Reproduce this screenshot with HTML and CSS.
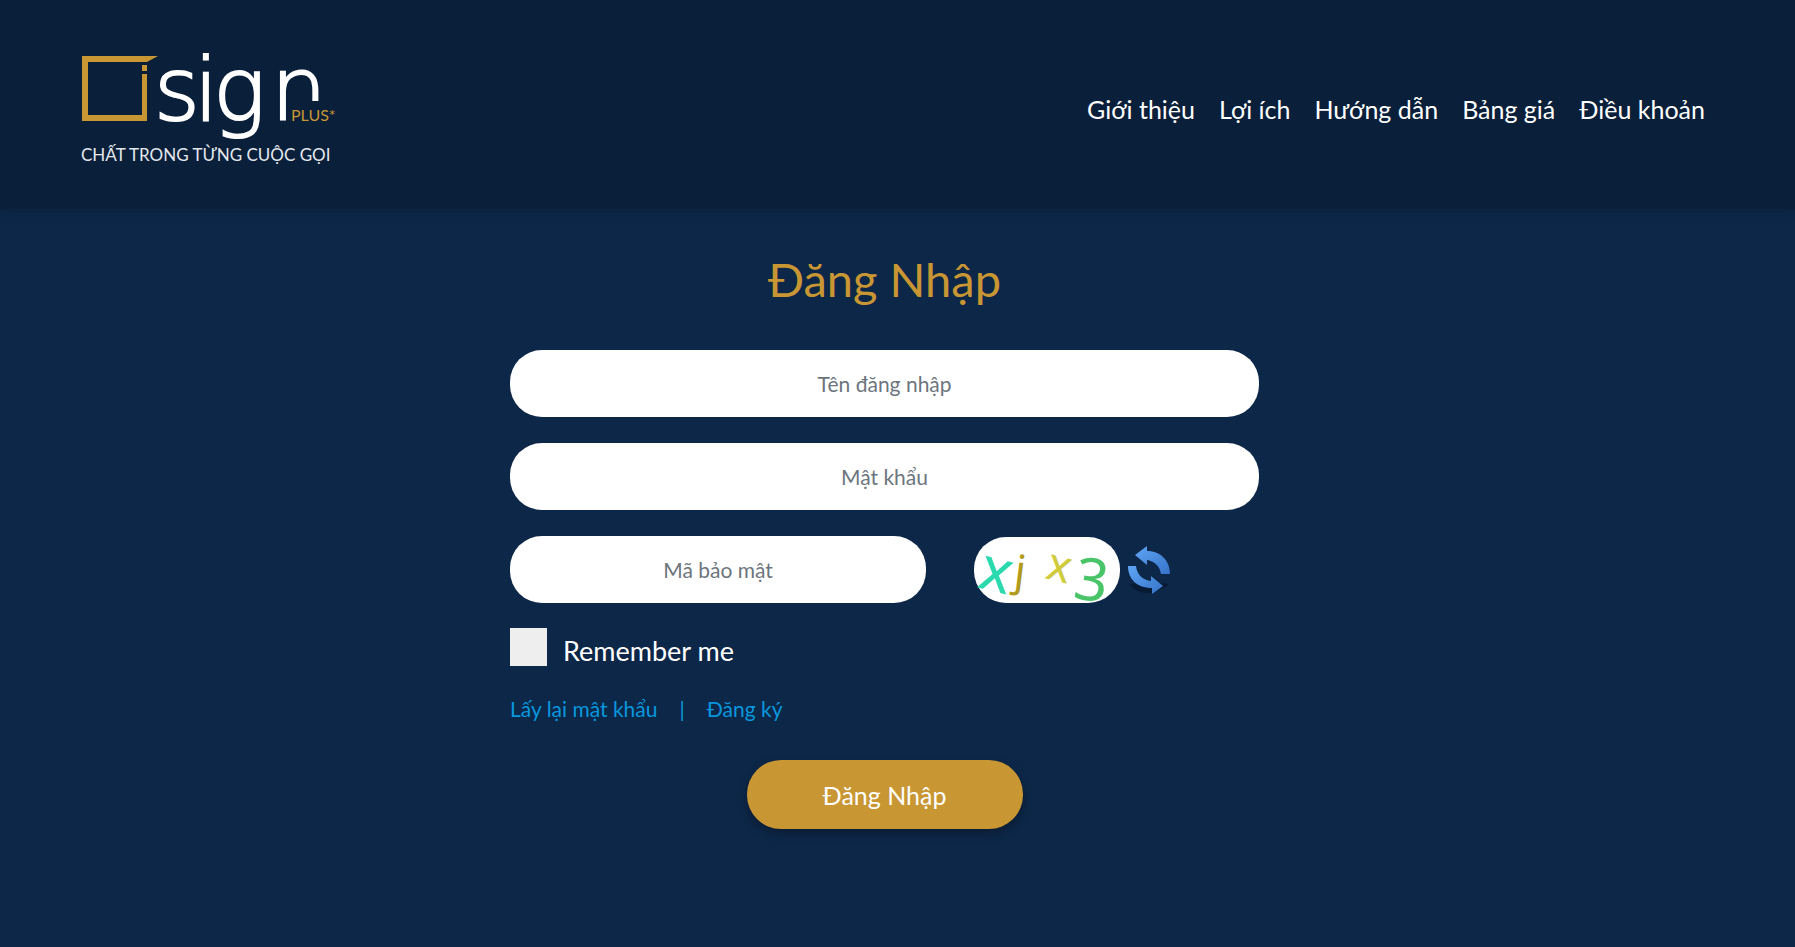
FILE: index.html
```html
<!DOCTYPE html>
<html lang="vi">
<head>
    <meta charset="UTF-8">
    <meta name="viewport" content="width=device-width, initial-scale=1.0">
    <title>Đăng Nhập</title>
    <link rel="stylesheet" href="styles.css">
</head>
<body>
    <header class="header">
        <a class="logo" href="#" aria-label="isign plus">
            <svg width="254" height="106" viewBox="0 0 254 106">
                <path fill="#c89632" d="M0 0H76L65 6H6V59H60V18H65V65H0zM60 9H65V15H60z"/>
                <text class="logo-name" x="72 112 131 189" y="64">sign</text>
                <rect x="207" y="45" width="47" height="22" fill="#0a1f3a"/>
                <text class="logo-plus" x="209" y="65">PLUS*</text>
                <text class="logo-slogan" x="-1" y="105">CHẤT TRONG TỪNG CUỘC GỌI</text>
            </svg>
        </a>
        <nav class="menu">
            <a href="#">Giới thiệu</a>
            <a href="#">Lợi ích</a>
            <a href="#">Hướng dẫn</a>
            <a href="#">Bảng giá</a>
            <a href="#">Điều khoản</a>
        </nav>
    </header>

    <main class="content">
        <form class="login-form">
            <h1>Đăng Nhập</h1>
            <input class="field" type="text" placeholder="Tên đăng nhập" aria-label="Tên đăng nhập">
            <input class="field" type="password" placeholder="Mật khẩu" aria-label="Mật khẩu">
            <div class="captcha-row">
                <input class="field" type="text" placeholder="Mã bảo mật" aria-label="Mã bảo mật">
                <div class="captcha">
                    <svg class="captcha-image" width="146" height="66" viewBox="0 0 146 66">
                        <g font-family="Noto Sans, sans-serif">
                            <text transform="translate(2 50) rotate(14)" font-size="61" fill="#2bd9ae">x</text>
                            <text transform="translate(39 48) rotate(7)" font-size="43" fill="#b29a1c">j</text>
                            <text transform="translate(70 41) rotate(14)" font-size="46" fill="#cfcb3c">x</text>
                            <text transform="translate(98 61) rotate(8)" font-size="59" fill="#49c468">3</text>
                        </g>
                    </svg>
                    <button class="refresh" type="button" aria-label="Refresh">
                        <svg width="44" height="50" viewBox="0 0 44 50">
                            <defs>
                                <linearGradient id="arrow" x1="0" y1="0" x2="1" y2="1">
                                    <stop offset="0" stop-color="#5fa5f5"/>
                                    <stop offset="1" stop-color="#3673c8"/>
                                </linearGradient>
                            </defs>
                            <path fill="#081b35" d="M2 39Q10 49 23 48L39 42L42 39Q36 38 30 38z"/>
                            <path fill="url(#arrow)" d="M8 10L20 1V6C34 6 43 16 43 29H34C33 21 27 16 20 15V20z"/>
                            <path fill="url(#arrow)" d="M1 21H9C10 30 16 35 24 36V31L36 41L25 49V43C10 43 1 34 1 21z"/>
                        </svg>
                    </button>
                </div>
            </div>
            <label class="remember">
                <input type="checkbox">
                <span>Remember me</span>
            </label>
            <div class="links">
                <a href="#">Lấy lại mật khẩu</a>
                <span>|</span>
                <a href="#">Đăng ký</a>
            </div>
            <button class="submit" type="submit">Đăng Nhập</button>
        </form>
    </main>
</body>
</html>
```
FILE: styles.css
```css
* {
    box-sizing: border-box;
}

body {
    margin: 0;
    min-height: 100vh;
    background-color: #0d2748;
    color: #fff;
    font-family: "Lato", sans-serif;
}

a {
    color: inherit;
    text-decoration: none;
}

.header {
    display: flex;
    justify-content: space-between;
    align-items: center;
    min-height: 209px;
    padding: 8px 90px 0 82px;
    background-color: #0a1f3a;
    box-shadow: 0 2px 8px rgba(10, 31, 58, 0.8);
}

.logo svg {
    display: block;
    overflow: visible;
}

.logo-name {
    font-family: "DejaVu Sans", sans-serif;
    font-size: 88px;
    font-weight: 200;
    fill: #fff;
    stroke: #fff;
    stroke-width: 2;
}

.logo-plus {
    font-size: 16px;
    fill: #c89632;
}

.logo-slogan {
    font-size: 17px;
    fill: #e4e8ee;
}

.menu {
    display: flex;
    gap: 24px;
    font-size: 25px;
}

.content {
    display: flex;
    justify-content: center;
    padding: 30px 36px 32px 10px;
}

.login-form {
    display: flex;
    flex-direction: column;
    width: 100%;
    max-width: 749px;
}

h1 {
    margin: 0 0 31px;
    color: #c89632;
    font-size: 47px;
    font-weight: 400;
    line-height: 80px;
    text-align: center;
}

.field {
    width: 100%;
    height: 67px;
    margin-bottom: 26px;
    padding: 0 24px;
    border: none;
    border-radius: 32px;
    background-color: #fff;
    color: #495057;
    font-family: inherit;
    font-size: 21px;
    text-align: center;
}

.field::placeholder {
    color: #6c757d;
    opacity: 1;
}

.field:focus {
    outline: none;
}

.captcha-row {
    display: grid;
    grid-template-columns: 5fr 4fr;
}

.captcha {
    display: flex;
    align-items: center;
    gap: 7px;
    height: 67px;
    margin-left: 48px;
}

.captcha-image {
    overflow: visible;
    border-radius: 32px;
    background-color: #fff;
}

.refresh {
    display: flex;
    padding: 0;
    border: none;
    background: none;
    cursor: pointer;
}

.remember {
    display: flex;
    align-items: flex-end;
    gap: 16px;
    align-self: flex-start;
    height: 37px;
    font-size: 27px;
    line-height: 30px;
    cursor: pointer;
}

.remember input {
    appearance: none;
    width: 37px;
    height: 38px;
    margin: 0;
    background-color: #eee;
}

.remember input:checked {
    background-color: #c89632;
}

.links {
    display: flex;
    gap: 22px;
    margin: 26px 0 34px;
    color: #0897de;
    font-size: 21px;
    line-height: 34px;
}

.submit {
    align-self: center;
    width: 276px;
    height: 69px;
    border: none;
    border-radius: 34px;
    background-color: #c89632;
    box-shadow: 0 4px 10px rgba(0, 0, 0, 0.3);
    color: #fff;
    font-family: inherit;
    font-size: 25px;
    cursor: pointer;
}
```
